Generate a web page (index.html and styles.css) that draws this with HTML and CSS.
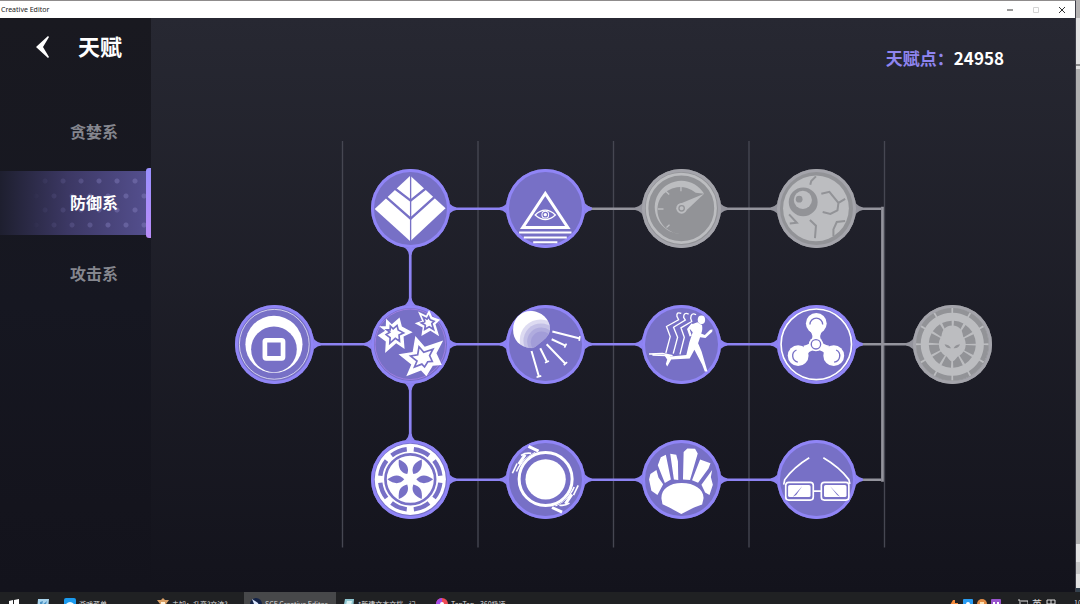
FILE: index.html
```html
<!DOCTYPE html>
<html lang="zh-CN">
<head>
<meta charset="utf-8">
<title>Creative Editor</title>
<link rel="stylesheet" href="styles.css">
</head>
<body>
<div class="desktop">
  <div class="window">
    <header class="titlebar">
      <span class="titlebar-name">Creative Editor</span>
      <button class="win-btn" aria-label="Minimize"><svg viewBox="0 0 8 8"><path d="M1 4H7"/></svg></button>
      <button class="win-btn win-btn-off" aria-label="Maximize" disabled><svg viewBox="0 0 8 8"><path d="M1.500 1.500H6.500V6.500H1.500Z"/></svg></button>
      <button class="win-btn" aria-label="Close"><svg viewBox="0 0 8 8"><path d="M1 1L7 7M7 1L1 7"/></svg></button>
    </header>
    <div class="app">
      <aside class="sidebar">
        <div class="sidebar-head">
          <button class="back" aria-label="返回"><svg viewBox="0 0 14 24"><path d="M13 1L14 2L8 12L14 22L13 23L1 12Z"/></svg></button>
          <h1 class="title">天赋</h1>
        </div>
        <nav class="tabs">
          <button class="tab">贪婪系</button>
          <button class="tab tab-active">防御系</button>
          <button class="tab">攻击系</button>
        </nav>
      </aside>
      <main class="content">
        <p class="points"><span class="points-label">天赋点：</span><span>24958</span></p>
        <div class="tree">
          <svg class="links" viewBox="0 0 1200 600" aria-hidden="true">
            <defs>
              <path id="joint" d="M52 -18Q58 -3 68 -2V2Q58 3 52 18Z"/>
              <g id="link"><path d="M55 -2H145V2H55Z"/><use href="#joint"/><use href="#joint" transform="translate(200) rotate(180)"/></g>
            </defs>
            <path class="divider" d="M200 0V600M400 0V600M600 0V600M800 0V600M1000 0V600"/>
            <g class="link-off">
              <use href="#link" transform="translate(500 100)"/>
              <use href="#link" transform="translate(700 100)"/>
              <use href="#joint" transform="translate(900 100)"/>
              <path d="M950 98H995V102H950ZM950 298H1050V302H950ZM950 498H995V502H950Z"/>
              <path d="M995 97H999V503H995Z"/>
              <use href="#joint" transform="translate(1100 300) rotate(180)"/>
            </g>
            <g class="link-on">
              <use href="#link" transform="translate(300 100)"/>
              <use href="#joint" transform="translate(500 100)"/>
              <use href="#link" transform="translate(100 300)"/>
              <use href="#link" transform="translate(300 300)"/>
              <use href="#link" transform="translate(500 300)"/>
              <use href="#link" transform="translate(700 300)"/>
              <use href="#joint" transform="translate(900 300)"/>
              <use href="#link" transform="translate(300 500)"/>
              <use href="#link" transform="translate(500 500)"/>
              <use href="#link" transform="translate(700 500)"/>
              <use href="#joint" transform="translate(900 500)"/>
              <use href="#link" transform="translate(300 100) rotate(90)"/>
              <use href="#link" transform="translate(300 300) rotate(90)"/>
            </g>
          </svg>
          <div class="nodes">
            <button class="node r1 c2" aria-label="叶片">
              <svg viewBox="33 30 234 234"><path class="w" d="M150 50L255 147L150 245L44 149Z"/><path class="cut" stroke-width="7" d="M104 88L151 124L196 88M78 114L151 178L222 114"/><path class="cut" stroke-width="4" d="M151 48V246"/></svg>
            </button>
            <button class="node r1 c3" aria-label="全视之眼">
              <svg viewBox="439 30 234 234"><path class="l" stroke-width="9" d="M556 103L489 204H623Z"/><path class="l" stroke-width="6" d="M478 219H634M492 234H620M520 248H592"/><path class="l" stroke-width="4" d="M526 167Q556 138 586 167Q556 194 526 167Z"/><circle class="l" stroke-width="3" cx="556" cy="166" r="10"/><circle class="w" cx="556" cy="166" r="5"/></svg>
            </button>
            <button class="node node-off r1 c4" aria-label="仪表">
              <svg viewBox="37 30 234 234"><circle class="l" stroke-width="8" cx="154" cy="147" r="102"/><path class="w" d="M222 104A79 79 0 1 0 150 223A72 72 0 0 1 92 116A70 70 0 0 1 197 101Z"/><path class="l" stroke-width="4" d="M153 80V96M108 96L118 106M84 149H101M110 204L119 196"/><path class="w" d="M145 136L222 104L164 158Z"/><circle class="w" cx="155" cy="147" r="16"/><circle class="cut" stroke-width="4" cx="155" cy="147" r="8"/></svg>
            </button>
            <button class="node node-off r1 c5" aria-label="裂眼">
              <svg viewBox="442 30 234 234"><circle class="w" cx="558" cy="147" r="98"/><circle class="f" cx="520" cy="128" r="43"/><circle class="w" cx="519" cy="122" r="27"/><circle class="f" cx="508" cy="120" r="10"/><path class="cut" stroke-width="6" d="M574 104L598 98L625 131L645 119M625 131L622 153L601 164L578 158M558 52L544 66L541 77M478 165L501 190L480 192M540 182L558 199L555 236M645 185L620 188L610 210V230"/></svg>
            </button>
            <button class="node r2 c1" aria-label="古币">
              <svg viewBox="33 31 234 234"><circle class="l" stroke-width="2" cx="150" cy="148" r="104"/><circle class="w" cx="149" cy="148" r="85"/><circle class="f" cx="149" cy="163" r="68"/><rect class="l" stroke-width="14" x="122" y="136" width="54" height="54" rx="4"/></svg>
            </button>
            <button class="node r2 c2" aria-label="群星">
              <svg viewBox="438 31 234 234"><circle class="thin" cx="555" cy="148" r="105"/>
                <g><path id="s1" class="w" d="M483 72L500 88L523 68L530 95L562 112L535 125L538 162L513 145L480 174L482 140L458 122L480 108L462 94L482 94Z"/><use href="#s1" class="star-mid" transform="translate(254 58) scale(.5)"/><circle class="w" cx="507" cy="116" r="10"/></g>
                <g><path id="s2" class="w" d="M578 50L602 62L611 46L620 66L644 75L630 88L641 124L615 108L588 123L592 98L568 85L590 78Z"/><use href="#s2" class="star-mid" transform="translate(304 42) scale(.5)"/><circle class="w" cx="608" cy="84" r="8"/></g>
                <g><path id="s3" class="w" d="M570 123L598 155L653 137L633 175L649 210L622 212L603 243L587 226L543 243L558 208L520 178L562 171Z"/><use href="#s3" class="star-mid" transform="translate(296 94) scale(.5)"/><circle class="w" cx="592" cy="189" r="11"/></g>
              </svg>
            </button>
            <button class="node r2 c3" aria-label="水母">
              <svg viewBox="34 31 234 234"><defs><clipPath id="dome"><path d="M55 105C55 65 85 46 112 49C145 52 168 80 165 105C162 122 152 132 138 142C128 150 120 160 108 160C75 157 55 135 55 105Z"/></clipPath></defs>
                <g clip-path="url(#dome)"><path class="w" d="M50 40H170V165H50Z"/><circle class="shade" cx="137" cy="136" r="62"/><circle class="shade" cx="138" cy="138" r="52"/><circle class="shade" cx="139" cy="140" r="42"/><circle class="shade" cx="140" cy="142" r="32"/></g>
                <path class="l" stroke-width="6" d="M172 110L254 131M170 133L211 152M155 148L211 206M136 160L156 200M110 168L132 244"/><path class="l" stroke-width="5" d="M254 124L252 138M214 146L208 158M216 201L206 210M150 203L162 198M125 246L139 242"/></svg>
            </button>
            <button class="node r2 c4" aria-label="奔跑">
              <svg viewBox="439 31 234 234"><path class="l" stroke-width="4" d="M556 56Q541 50 543 65L548 75L512 95L523 125L510 174M578 58Q563 51 563 68L568 76L533 97L545 127L532 176M600 60Q585 52 584 70L587 80L555 99L565 127L552 178M460 177L500 175L530 182L470 180"/>
                <ellipse class="w" cx="616" cy="75" rx="11" ry="13"/><path class="w" d="M604 82L618 91Q620 108 615 116L626 120L642 105L649 104L648 111L628 129L612 127L606 145L616 168L634 229L626 229L618 208L595 164L581 190L526 193L514 214L510 207L514 193L505 180L514 178L524 184L571 180L580 142L590 112L578 98L584 90Z"/><path class="l" stroke-width="7" d="M590 88L577 103L584 124"/></svg>
            </button>
            <button class="node r2 c5" aria-label="指尖陀螺">
              <svg viewBox="37 31 234 234"><circle class="l" stroke-width="5" cx="154" cy="148" r="105"/><path class="w" d="M135 108Q147 122 139 137Q134 151 116 152L123 184Q132 168 145 166Q154 162 163 166Q176 168 185 184L192 152Q174 151 169 137Q161 122 173 108Z"/><circle class="w" cx="154" cy="86" r="31"/><circle class="w" cx="100" cy="182" r="31"/><circle class="w" cx="206" cy="182" r="31"/><circle class="w" cx="153" cy="148" r="21"/><circle class="cut" stroke-width="4" cx="153" cy="148" r="14"/><path class="cut" stroke-width="4" d="M135 89A19 19 0 0 1 173 89M99 201A19 19 0 0 1 95 165M207 201A19 19 0 0 0 213 165"/></svg>
            </button>
            <button class="node node-off r2 c6" aria-label="外星人">
              <svg viewBox="443 31 234 234"><circle class="w" cx="560" cy="148" r="108"/><circle class="cut" stroke-width="14" cx="560" cy="148" r="101" pathLength="120" stroke-dasharray="9 1" stroke-dashoffset="-.5"/><circle class="cut" stroke-width="30" cx="560" cy="148" r="55" pathLength="120" stroke-dasharray="8 2" stroke-dashoffset="-1"/><path class="w" d="M560 92C582 92 594 109 592 133C590 160 573 198 560 199C547 198 530 160 528 133C526 109 538 92 560 92Z"/><path class="f" d="M537 148Q552 149 556 160Q541 161 537 148ZM583 148Q568 149 564 160Q579 161 583 148Z"/></svg>
            </button>
            <button class="node r3 c2" aria-label="轮盘">
              <svg viewBox="33 32 234 234"><defs><path id="petal" d="M168 149Q188 126 218 149Q188 172 168 149Z"/></defs><circle class="w" cx="150" cy="149" r="106"/><circle class="cut" stroke-width="13" cx="150" cy="149" r="90" pathLength="80" stroke-dasharray="7 3" stroke-dashoffset="-1.500"/><circle class="cut" stroke-width="8" cx="150" cy="149" r="74"/><g class="f"><use href="#petal"/><use href="#petal" transform="rotate(60 150 149)"/><use href="#petal" transform="rotate(120 150 149)"/><use href="#petal" transform="rotate(180 150 149)"/><use href="#petal" transform="rotate(240 150 149)"/><use href="#petal" transform="rotate(300 150 149)"/></g></svg>
            </button>
            <button class="node r3 c3" aria-label="星球">
              <svg viewBox="439 32 234 234"><defs><g id="wing"><path class="l" stroke-width="9" d="M477 104L496 76M506 51L536 65"/><path class="l" stroke-width="5" d="M458 131L472 102M470 126Q479 103 505 83L526 70M484 78Q498 69 514 72"/></g></defs><use href="#wing"/><use href="#wing" transform="rotate(180 556 149)"/><circle class="f" cx="557" cy="148" r="84"/><circle class="l" stroke-width="9" cx="557" cy="148" r="79"/><circle class="w" cx="557" cy="149" r="60"/></svg>
            </button>
            <button class="node r3 c4" aria-label="贝壳">
              <svg viewBox="35 32 234 234"><path class="w" d="M93 207C91 180 115 160 153 160C193 160 221 181 218 207L214 224L190 233L152 252L118 234L96 223ZM56 150L60 133L78 121L84 144L98 164L81 196L63 183ZM82 107L91 83L106 76L121 150L103 160ZM119 73L137 76L142 95L143 151L130 150ZM159 68L170 57L193 58L201 72L178 151L157 150ZM208 90L239 101L233 117L202 159L184 152ZM244 121L240 142L246 165L236 196L223 188L212 165Z"/></svg>
            </button>
            <button class="node r3 c5" aria-label="眼镜">
              <svg viewBox="442 32 234 234"><path class="l" stroke-width="5" d="M538 85Q492 113 465 150L462 165M580 85Q628 113 656 150L659 163M551 184H573"/><rect class="l" stroke-width="5" x="468" y="158" width="82" height="53" rx="9"/><rect class="l" stroke-width="5" x="574" y="158" width="82" height="53" rx="9"/><rect class="w" x="475" y="166" width="67" height="36" rx="5"/><rect class="w" x="582" y="166" width="67" height="36" rx="5"/><path class="f" d="M517 170L489 201L499 196ZM600 170L630 201L621 196Z"/></svg>
            </button>
          </div>
        </div>
      </main>
    </div>
  </div>
  <div class="behind" aria-hidden="true"></div>
</div>
<footer class="taskbar">
  <div class="taskbar-row">
    <button class="pin" aria-label="开始"><svg viewBox="0 0 12 12"><path fill="#fff" d="M1 3L5 2V6H1ZM6 2L11 1V6H6ZM1 7H5V11L1 10ZM6 7H11V12L6 11Z"/></svg></button>
    <button class="pin" aria-label="便笺"><svg viewBox="0 0 12 12"><path fill="#a9d5ee" d="M1 1H12L11 12H0Z"/><path fill="#4a92c4" d="M3 4L6 3L5 7L10 3L8 9L3 10Z"/></svg></button>
    <button class="task"><svg viewBox="0 0 12 12"><rect fill="#1b9bf0" width="12" height="12" rx="2"/><path fill="#e8f8ff" d="M2 6Q6 2 10 6L9 10H3Z"/></svg>游戏菜单</button>
    <button class="task"><svg viewBox="0 0 12 12"><path fill="#d9a066" d="M0 2L4 2L6 0L8 2L12 2L9 6V12H3V6Z"/><path fill="#fff0d8" d="M4 4H8V8H4Z"/></svg>未知：升变?交流?</button>
    <button class="task task-active"><svg viewBox="0 0 12 12"><circle fill="#142449" cx="6" cy="6" r="6"/><path fill="#dce8ff" d="M2 1L8 5L10 10L4 6Z"/></svg>SCE Creative Editor</button>
    <button class="task"><svg viewBox="0 0 12 12"><path fill="#8fc7d2" d="M2 1H11L10 12H0Z"/><path fill="#d8f0f0" d="M4 3H9L8 7H3Z"/></svg>*新建文本文档 - 记</button>
    <button class="task"><svg viewBox="0 0 12 12"><circle fill="#f04b55" cx="6" cy="6" r="6"/><path fill="#3d7cf5" d="M0 6A6 6 0 0 0 6 12V6Z"/><path fill="#a34be8" d="M6 0A6 6 0 0 0 0 6H6Z"/><circle fill="#fff" cx="6" cy="6" r="2"/></svg>TapTap - 360极速</button>
    <div class="tray">
      <svg viewBox="0 0 10 10"><path fill="#f58b3c" d="M4 1H6V4H9V7H6L8 10H2L4 7L1 6Z"/></svg>
      <svg viewBox="0 0 10 10"><rect fill="#2a9df4" width="10" height="10" rx="1"/><circle fill="#fff" cx="5" cy="5" r="2"/></svg>
      <svg viewBox="0 0 10 10"><circle fill="#e08b45" cx="5" cy="5" r="5"/><path fill="#ffe0b0" d="M3 3H7V5H3Z"/></svg>
      <svg viewBox="0 0 10 10"><rect fill="#9a55cf" width="10" height="10" rx="1"/><path fill="#fff" d="M2 3H4V5H2ZM6 3H8V5H6ZM4 6H6V8H4Z"/></svg>
      <svg class="tray-net" viewBox="0 0 10 10"><path fill="none" stroke="#ddd" d="M3 2H10V8H3M0 1H2V9"/></svg>
      <span class="ime">英</span>
      <svg class="tray-grid" viewBox="0 0 10 10"><path fill="none" stroke="#ddd" d="M1 1H9V9H1ZM1 5H9M5 1V9"/></svg>
      <span class="clock">10</span>
    </div>
  </div>
</footer>
</body>
</html>
```
FILE: styles.css
```css
* { box-sizing: border-box; }

body {
  margin: 0;
  min-height: 100vh;
  display: flex;
  flex-direction: column;
  overflow-x: hidden;
  background: #15151e;
  font-family: "Noto Sans CJK SC", "Noto Sans", sans-serif;
  color: #fff;
}

button {
  margin: 0;
  padding: 0;
  border: 0;
  background: none;
  color: inherit;
  font: inherit;
  cursor: pointer;
}

svg { display: block; }

.desktop {
  flex: 1;
  display: flex;
}

.window {
  flex: 1;
  display: flex;
  flex-direction: column;
  border-top: 1px solid #8f8c8c;
  border-right: 1px solid #3c3c46;
}

.behind {
  width: 4px;
  background: linear-gradient(#b5b3b3 18px, #e2e2e2 18px 64px, #8a8a8a 64px 66px, #e2e2e2 66px 69px, #b1b1b1 69px calc(100% - 48px), #e4e4e4 calc(100% - 48px) calc(100% - 30px), #c8c8c8 calc(100% - 30px) calc(100% - 18px), #e4e4e4 calc(100% - 18px) calc(100% - 4px), #34424f calc(100% - 4px));
}

/* window title bar */
.titlebar {
  display: flex;
  align-items: center;
  height: 17px;
  background: #fff;
}

.titlebar-name {
  flex: 1;
  padding-left: 1px;
  color: #222;
  font-family: "Noto Sans", sans-serif;
  font-size: 7px;
  line-height: 16px;
}

.win-btn {
  display: grid;
  place-items: center;
  width: 26px;
  height: 16px;
}

.win-btn svg {
  width: 8px;
  height: 8px;
  fill: none;
  stroke: #333;
}

.win-btn-off svg { stroke: #d4d4d4; }

/* application */
.app {
  flex: 1;
  display: flex;
  background: linear-gradient(#272832, #13131c);
}

.sidebar {
  width: 151px;
  flex-shrink: 0;
  background: linear-gradient(#191920, #161721 50%, #14141d 85%, #13131c);
}

.sidebar-head {
  display: flex;
  align-items: center;
  gap: 29px;
  height: 57px;
  padding-left: 35px;
}

.back svg {
  width: 14px;
  height: 24px;
  fill: #fff;
}

.title {
  margin: 0;
  padding-bottom: 4px;
  font-size: 22px;
  line-height: 32px;
}

.tabs {
  display: flex;
  flex-direction: column;
  gap: 7px;
  padding-top: 25px;
}

.tab {
  position: relative;
  height: 64px;
  padding: 0 33px 2px 0;
  color: #85868e;
  font-size: 16px;
  font-weight: 700;
  line-height: 24px;
  text-align: right;
}

.tab-active {
  z-index: 0;
  color: #fff;
  background: linear-gradient(90deg, #1e1f2f, #3c3864 45%, #555090);
}

.tab-active::before {
  content: "";
  position: absolute;
  inset: 0;
  z-index: -1;
  background:
    radial-gradient(circle at 9px 10px, #8580bf70 2px, transparent 3px) 0 0 / 18px 29px,
    radial-gradient(circle at 9px 10px, #8580bf70 2px, transparent 3px) 9px 15px / 18px 29px;
  mask-image: linear-gradient(90deg, transparent 20%, #000 70%);
}

.tab-active::after {
  content: "";
  position: absolute;
  top: -3px;
  right: 0;
  bottom: -3px;
  width: 5px;
  border-radius: 3px 0 0 3px;
  background: linear-gradient(#9a90ff, #b98cf8);
}

.content {
  flex: 1;
  padding: 28px 55px 44px 56px;
}

.points {
  display: flex;
  justify-content: flex-end;
  margin: 0 16px 71px 0;
  font-size: 17px;
  font-weight: 700;
  line-height: 24px;
}

.points-label { color: #8f85f0; }

/* talent tree */
.tree {
  display: grid;
  aspect-ratio: 2;
}

.links,
.nodes {
  grid-area: 1 / 1;
  width: 100%;
  height: 100%;
}

.divider {
  stroke: #464752;
  stroke-width: 2;
}

.link-on { fill: #8d83f3; }
.link-off { fill: #94949d; }

.nodes {
  display: grid;
  grid-template: repeat(3, 1fr) / repeat(6, 1fr);
  place-items: center;
}

.c1 { grid-column: 1; }
.c2 { grid-column: 2; }
.c3 { grid-column: 3; }
.c4 { grid-column: 4; }
.c5 { grid-column: 5; }
.c6 { grid-column: 6; }
.r1 { grid-row: 1; }
.r2 { grid-row: 2; }
.r3 { grid-row: 3; }

.node {
  --fill: #7770c6;
  --ink: #fff;
  width: 58%;
  border-radius: 50%;
  overflow: hidden;
  background: var(--fill);
  box-shadow: inset 0 0 0 3px #9085f6;
}

.node-off {
  --fill: #929397;
  --ink: #bcbdc0;
  box-shadow: inset 0 0 0 3px #a4a4ab;
}

.node svg { width: 100%; }

.w { fill: var(--ink); }
.f { fill: var(--fill); }

.l {
  fill: none;
  stroke: var(--ink);
}

.cut {
  fill: none;
  stroke: var(--fill);
}

.thin {
  fill: none;
  stroke: #b184ee;
  stroke-width: 2;
}

.star-mid {
  stroke: var(--fill);
  stroke-width: 10;
}

.shade {
  fill: var(--fill);
  opacity: 0.25;
}

/* desktop taskbar, mostly below the screen edge */
.taskbar {
  height: 12px;
  overflow: hidden;
  background: #202123;
  color: #ddd;
  font-size: 7px;
}

.taskbar-row {
  display: flex;
  align-items: center;
  gap: 1px;
  height: 23px;
}

.pin { width: 28px; }

.pin svg,
.task svg {
  flex-shrink: 0;
  width: 12px;
  height: 12px;
}

.pin svg { margin: 0 auto; }

.task {
  display: flex;
  align-items: center;
  gap: 3px;
  width: 92px;
  height: 23px;
  padding-left: 6px;
  white-space: nowrap;
  overflow: hidden;
}

.task-active { background: #47484a; }

.tray {
  flex: 1;
  display: flex;
  align-items: center;
  justify-content: flex-end;
  gap: 4px;
}

.tray svg {
  width: 10px;
  height: 10px;
}

.tray .tray-net { margin-left: 13px; }

.ime { font-size: 10px; }

.clock {
  margin-left: 14px;
  width: 6px;
  overflow: hidden;
  line-height: 14px;
  align-self: flex-start;
}
```
